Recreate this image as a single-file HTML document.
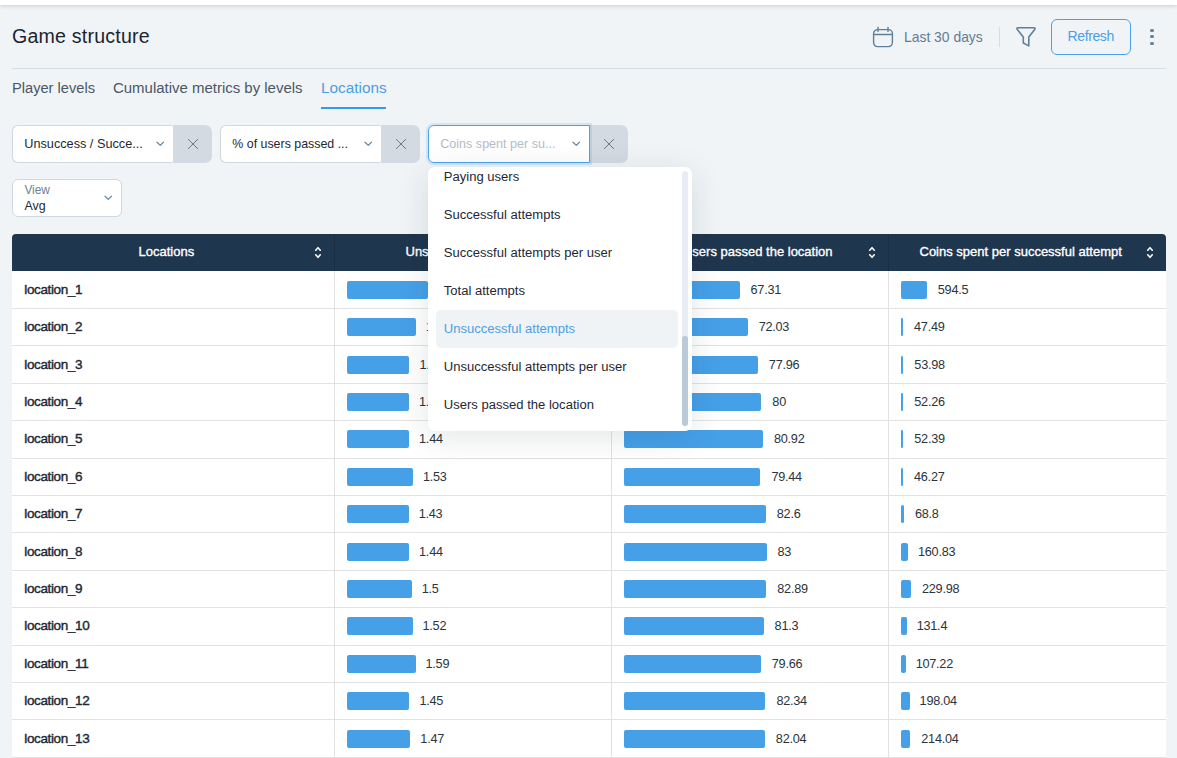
<!DOCTYPE html><html><head><meta charset="utf-8"><style>
html,body{margin:0;padding:0}
body{width:1177px;height:758px;overflow:hidden;background:#f0f4f7;position:relative;font-family:"Liberation Sans",sans-serif}
.t{position:absolute;white-space:nowrap}
.a{position:absolute}
</style></head><body>
<div class="a" style="left:0;top:0;width:1177px;height:5px;background:#fff;box-shadow:0 1px 4px rgba(0,0,0,0.16)"></div>
<div class="t" style="left:12px;top:26.61px;font-size:19.6px;line-height:19.6px;color:#1b2530;font-weight:400;letter-spacing:0.2px;">Game structure</div>
<svg class="a" style="left:872px;top:26px" width="22" height="22" viewBox="0 0 22 22" fill="none" stroke="#5f7f9a" stroke-width="1.4" stroke-linecap="round">
<rect x="1.6" y="3.6" width="18.8" height="17" rx="4"/><line x1="1.6" y1="8.5" x2="20.4" y2="8.5"/><line x1="6" y1="1.4" x2="6" y2="5.4"/><line x1="16" y1="1.4" x2="16" y2="5.4"/></svg>
<div class="t" style="left:904px;top:30.93px;font-size:13.9px;line-height:13.9px;color:#617d95;font-weight:400;">Last 30 days</div>
<div class="a" style="left:999px;top:27px;width:1px;height:20px;background:#d6dde4"></div>
<svg class="a" style="left:1016px;top:26px" width="20" height="22" viewBox="0 0 20 22" fill="none" stroke="#5f7f9a" stroke-width="1.6" stroke-linejoin="round">
<path d="M1.9,1.8 H18.1 Q19.6,2 18.7,3.4 L12.8,11 V19.9 L7.3,17 V11 L1.3,3.4 Q0.4,2 1.9,1.8 Z"/></svg>
<div class="a" style="left:1051px;top:19px;width:78px;height:34px;border:1px solid #4aa3e8;border-radius:6px"></div>
<div class="t" style="left:1067.5px;top:29.15px;font-size:14px;line-height:14px;color:#4a9fe3;font-weight:400;letter-spacing:-0.38px;">Refresh</div>
<div class="a" style="left:1150.35px;top:28.75px;width:3.3px;height:3.3px;border-radius:50%;background:#5f7f9a"></div>
<div class="a" style="left:1150.35px;top:35.15px;width:3.3px;height:3.3px;border-radius:50%;background:#5f7f9a"></div>
<div class="a" style="left:1150.35px;top:41.75px;width:3.3px;height:3.3px;border-radius:50%;background:#5f7f9a"></div>
<div class="a" style="left:12px;top:68px;width:1154px;height:1px;background:#d5dde5"></div>
<div class="t" style="left:12px;top:80.13px;font-size:15.2px;line-height:15.2px;color:#4a5866;font-weight:400;transform:scaleX(0.964);transform-origin:0 0;">Player levels</div>
<div class="t" style="left:113px;top:80.13px;font-size:15.2px;line-height:15.2px;color:#4a5866;font-weight:400;transform:scaleX(0.985);transform-origin:0 0;">Cumulative metrics by levels</div>
<div class="t" style="left:321px;top:80.13px;font-size:15.2px;line-height:15.2px;color:#4a9fe3;font-weight:400;transform:scaleX(1.01);transform-origin:0 0;">Locations</div>
<div class="a" style="left:321px;top:107px;width:65px;height:2px;background:#379ae6"></div>
<div class="a" style="left:167px;top:125px;width:45px;height:38px;background:#d3dae2;border-radius:0 7px 7px 0"></div>
<div class="a" style="left:12px;top:125px;width:159px;height:36px;background:#fff;border:1px solid #cfd8e1;border-right:1px solid #fff;border-radius:6px 0 0 6px"></div>
<div class="t" style="left:24.3px;top:138.35px;font-size:12.7px;line-height:12.7px;color:#1e2833;font-weight:400;">Unsuccess / Succe...</div>
<svg class="a" style="left:155.5px;top:141px" width="9" height="6" viewBox="0 0 9 6" fill="none" stroke="#6a90b0" stroke-width="1.3" stroke-linecap="round" stroke-linejoin="round"><path d="M1,1.2 L4.25,4.2 L7.5,1.2"/></svg>
<svg class="a" style="left:186.5px;top:138px" width="12" height="12" viewBox="0 0 12 12" stroke="#6f7882" stroke-width="1.0" stroke-linecap="round"><path d="M1.3,1.3 L10.7,10.7 M10.7,1.3 L1.3,10.7"/></svg>
<div class="a" style="left:375px;top:125px;width:45px;height:38px;background:#d3dae2;border-radius:0 7px 7px 0"></div>
<div class="a" style="left:220px;top:125px;width:159px;height:36px;background:#fff;border:1px solid #cfd8e1;border-right:1px solid #fff;border-radius:6px 0 0 6px"></div>
<div class="t" style="left:232.3px;top:137.70px;font-size:12.4px;line-height:12.4px;color:#1e2833;font-weight:400;">% of users passed ...</div>
<svg class="a" style="left:363.5px;top:141px" width="9" height="6" viewBox="0 0 9 6" fill="none" stroke="#6a90b0" stroke-width="1.3" stroke-linecap="round" stroke-linejoin="round"><path d="M1,1.2 L4.25,4.2 L7.5,1.2"/></svg>
<svg class="a" style="left:394.5px;top:138px" width="12" height="12" viewBox="0 0 12 12" stroke="#6f7882" stroke-width="1.0" stroke-linecap="round"><path d="M1.3,1.3 L10.7,10.7 M10.7,1.3 L1.3,10.7"/></svg>
<div class="a" style="left:583px;top:125px;width:45px;height:38px;background:#d3dae2;border-radius:0 7px 7px 0"></div>
<div class="a" style="left:428px;top:125px;width:162px;height:38px;border-radius:6px 0 0 6px;box-shadow:0 0 0 2px rgba(74,163,232,0.18)"></div>
<div class="a" style="left:428px;top:125px;width:160px;height:36px;background:#fff;border:1px solid #4aa3e8;border-radius:6px 0 0 6px"></div>
<div class="t" style="left:440.3px;top:138.48px;font-size:12.55px;line-height:12.55px;color:#b3bcc6;font-weight:400;">Coins spent per su...</div>
<svg class="a" style="left:571.5px;top:141px" width="9" height="6" viewBox="0 0 9 6" fill="none" stroke="#6a90b0" stroke-width="1.3" stroke-linecap="round" stroke-linejoin="round"><path d="M1,1.2 L4.25,4.2 L7.5,1.2"/></svg>
<svg class="a" style="left:602.5px;top:138px" width="12" height="12" viewBox="0 0 12 12" stroke="#6f7882" stroke-width="1.0" stroke-linecap="round"><path d="M1.3,1.3 L10.7,10.7 M10.7,1.3 L1.3,10.7"/></svg>
<div class="a" style="left:12px;top:179px;width:108px;height:36px;background:#fff;border:1px solid #cfd8e1;border-radius:6px"></div>
<div class="t" style="left:24.4px;top:184.53px;font-size:11.9px;line-height:11.9px;color:#6e8191;font-weight:400;">View</div>
<div class="t" style="left:24.4px;top:200.20px;font-size:12.4px;line-height:12.4px;color:#1e2833;font-weight:400;">Avg</div>
<svg class="a" style="left:103.5px;top:195px" width="9" height="6" viewBox="0 0 9 6" fill="none" stroke="#6a90b0" stroke-width="1.3" stroke-linecap="round" stroke-linejoin="round"><path d="M1,1.2 L4.25,4.2 L7.5,1.2"/></svg>
<div class="a" style="left:12px;top:234px;width:1154px;height:37px;background:#1f364f;border-radius:4px 4px 0 0"></div>
<div class="a" style="left:334px;top:234px;width:1px;height:37px;background:#1a2f45"></div>
<div class="a" style="left:611px;top:234px;width:1px;height:37px;background:#1a2f45"></div>
<div class="a" style="left:888px;top:234px;width:1px;height:37px;background:#1a2f45"></div>
<div class="t" style="left:138.5px;top:245.00px;font-size:13px;line-height:13px;color:#fff;font-weight:400;-webkit-text-stroke:0.35px #fff;">Locations</div>
<svg class="a" style="left:314px;top:246px" width="8" height="13" viewBox="0 0 8 13" fill="none" stroke="#fff" stroke-width="1.6" stroke-linecap="round" stroke-linejoin="round"><path d="M1.75,4.2 L4,1.7 L6.25,4.2 M1.75,8.8 L4,11.3 L6.25,8.8"/></svg>
<div class="t" style="left:405.5px;top:245.00px;font-size:13px;line-height:13px;color:#fff;font-weight:400;-webkit-text-stroke:0.35px #fff;">Unsuccess / Success attempts</div>
<svg class="a" style="left:591px;top:246px" width="8" height="13" viewBox="0 0 8 13" fill="none" stroke="#fff" stroke-width="1.6" stroke-linecap="round" stroke-linejoin="round"><path d="M1.75,4.2 L4,1.7 L6.25,4.2 M1.75,8.8 L4,11.3 L6.25,8.8"/></svg>
<div class="t" style="left:655.5px;top:245.00px;font-size:13px;line-height:13px;color:#fff;font-weight:400;-webkit-text-stroke:0.35px #fff;">% of users passed the location</div>
<svg class="a" style="left:868px;top:246px" width="8" height="13" viewBox="0 0 8 13" fill="none" stroke="#fff" stroke-width="1.6" stroke-linecap="round" stroke-linejoin="round"><path d="M1.75,4.2 L4,1.7 L6.25,4.2 M1.75,8.8 L4,11.3 L6.25,8.8"/></svg>
<div class="t" style="left:919.5px;top:245.00px;font-size:13px;line-height:13px;color:#fff;font-weight:400;-webkit-text-stroke:0.35px #fff;">Coins spent per successful attempt</div>
<svg class="a" style="left:1146px;top:246px" width="8" height="13" viewBox="0 0 8 13" fill="none" stroke="#fff" stroke-width="1.6" stroke-linecap="round" stroke-linejoin="round"><path d="M1.75,4.2 L4,1.7 L6.25,4.2 M1.75,8.8 L4,11.3 L6.25,8.8"/></svg>
<div class="a" style="left:12px;top:271px;width:1154px;height:487px;background:#fff"></div>
<div class="a" style="left:12px;top:308px;width:1154px;height:1px;background:#e2e2e2"></div>
<div class="a" style="left:12px;top:345px;width:1154px;height:1px;background:#e2e2e2"></div>
<div class="a" style="left:12px;top:383px;width:1154px;height:1px;background:#e2e2e2"></div>
<div class="a" style="left:12px;top:420px;width:1154px;height:1px;background:#e2e2e2"></div>
<div class="a" style="left:12px;top:458px;width:1154px;height:1px;background:#e2e2e2"></div>
<div class="a" style="left:12px;top:495px;width:1154px;height:1px;background:#e2e2e2"></div>
<div class="a" style="left:12px;top:532px;width:1154px;height:1px;background:#e2e2e2"></div>
<div class="a" style="left:12px;top:570px;width:1154px;height:1px;background:#e2e2e2"></div>
<div class="a" style="left:12px;top:607px;width:1154px;height:1px;background:#e2e2e2"></div>
<div class="a" style="left:12px;top:645px;width:1154px;height:1px;background:#e2e2e2"></div>
<div class="a" style="left:12px;top:682px;width:1154px;height:1px;background:#e2e2e2"></div>
<div class="a" style="left:12px;top:719px;width:1154px;height:1px;background:#e2e2e2"></div>
<div class="a" style="left:12px;top:757px;width:1154px;height:1px;background:#e2e2e2"></div>
<div class="a" style="left:334px;top:271px;width:1px;height:487px;background:#e2e2e2"></div>
<div class="a" style="left:611px;top:271px;width:1px;height:487px;background:#e2e2e2"></div>
<div class="a" style="left:888px;top:271px;width:1px;height:487px;background:#e2e2e2"></div>
<div class="t" style="left:24.3px;top:282.87px;font-size:13.5px;line-height:13.5px;color:#1e2833;font-weight:400;letter-spacing:-0.37px;-webkit-text-stroke:0.4px #1e2833;">location_1</div>
<div class="a" style="left:347px;top:281px;width:81.03px;height:18px;background:#46a0e8;border-radius:2px"></div>
<div class="t" style="left:438.028px;top:283.75px;font-size:12.7px;line-height:12.7px;color:#2b333c;font-weight:400;letter-spacing:-0.25px;">1.88</div>
<div class="a" style="left:624px;top:281px;width:115.57px;height:18px;background:#46a0e8;border-radius:2px"></div>
<div class="t" style="left:750.57127px;top:283.75px;font-size:12.7px;line-height:12.7px;color:#2b333c;font-weight:400;letter-spacing:-0.25px;">67.31</div>
<div class="a" style="left:901px;top:281px;width:25.80px;height:18px;background:#46a0e8;border-radius:2px"></div>
<div class="t" style="left:937.8013px;top:283.75px;font-size:12.7px;line-height:12.7px;color:#2b333c;font-weight:400;letter-spacing:-0.25px;">594.5</div>
<div class="t" style="left:24.3px;top:320.27px;font-size:13.5px;line-height:13.5px;color:#1e2833;font-weight:400;letter-spacing:-0.37px;-webkit-text-stroke:0.4px #1e2833;">location_2</div>
<div class="a" style="left:347px;top:318px;width:68.96px;height:18px;background:#46a0e8;border-radius:2px"></div>
<div class="t" style="left:425.96000000000004px;top:321.15px;font-size:12.7px;line-height:12.7px;color:#2b333c;font-weight:400;letter-spacing:-0.25px;">1.6</div>
<div class="a" style="left:624px;top:318px;width:123.68px;height:18px;background:#46a0e8;border-radius:2px"></div>
<div class="t" style="left:758.67551px;top:321.15px;font-size:12.7px;line-height:12.7px;color:#2b333c;font-weight:400;letter-spacing:-0.25px;">72.03</div>
<div class="a" style="left:901px;top:318px;width:2.06px;height:18px;background:#46a0e8;border-radius:2px"></div>
<div class="t" style="left:914.061066px;top:321.15px;font-size:12.7px;line-height:12.7px;color:#2b333c;font-weight:400;letter-spacing:-0.25px;">47.49</div>
<div class="t" style="left:24.3px;top:357.67px;font-size:13.5px;line-height:13.5px;color:#1e2833;font-weight:400;letter-spacing:-0.37px;-webkit-text-stroke:0.4px #1e2833;">location_3</div>
<div class="a" style="left:347px;top:356px;width:62.49px;height:18px;background:#46a0e8;border-radius:2px"></div>
<div class="t" style="left:419.495px;top:358.55px;font-size:12.7px;line-height:12.7px;color:#2b333c;font-weight:400;letter-spacing:-0.25px;">1.45</div>
<div class="a" style="left:624px;top:356px;width:133.86px;height:18px;background:#46a0e8;border-radius:2px"></div>
<div class="t" style="left:768.85732px;top:358.55px;font-size:12.7px;line-height:12.7px;color:#2b333c;font-weight:400;letter-spacing:-0.25px;">77.96</div>
<div class="a" style="left:901px;top:356px;width:2.34px;height:18px;background:#46a0e8;border-radius:2px"></div>
<div class="t" style="left:914.342732px;top:358.55px;font-size:12.7px;line-height:12.7px;color:#2b333c;font-weight:400;letter-spacing:-0.25px;">53.98</div>
<div class="t" style="left:24.3px;top:395.07px;font-size:13.5px;line-height:13.5px;color:#1e2833;font-weight:400;letter-spacing:-0.37px;-webkit-text-stroke:0.4px #1e2833;">location_4</div>
<div class="a" style="left:347px;top:393px;width:62.06px;height:18px;background:#46a0e8;border-radius:2px"></div>
<div class="t" style="left:419.064px;top:395.95px;font-size:12.7px;line-height:12.7px;color:#2b333c;font-weight:400;letter-spacing:-0.25px;">1.44</div>
<div class="a" style="left:624px;top:393px;width:137.36px;height:18px;background:#46a0e8;border-radius:2px"></div>
<div class="t" style="left:772.36px;top:395.95px;font-size:12.7px;line-height:12.7px;color:#2b333c;font-weight:400;letter-spacing:-0.25px;">80</div>
<div class="a" style="left:901px;top:393px;width:2.27px;height:18px;background:#46a0e8;border-radius:2px"></div>
<div class="t" style="left:914.268084px;top:395.95px;font-size:12.7px;line-height:12.7px;color:#2b333c;font-weight:400;letter-spacing:-0.25px;">52.26</div>
<div class="t" style="left:24.3px;top:432.47px;font-size:13.5px;line-height:13.5px;color:#1e2833;font-weight:400;letter-spacing:-0.37px;-webkit-text-stroke:0.4px #1e2833;">location_5</div>
<div class="a" style="left:347px;top:430px;width:62.06px;height:18px;background:#46a0e8;border-radius:2px"></div>
<div class="t" style="left:419.064px;top:433.35px;font-size:12.7px;line-height:12.7px;color:#2b333c;font-weight:400;letter-spacing:-0.25px;">1.44</div>
<div class="a" style="left:624px;top:430px;width:138.94px;height:18px;background:#46a0e8;border-radius:2px"></div>
<div class="t" style="left:773.93964px;top:433.35px;font-size:12.7px;line-height:12.7px;color:#2b333c;font-weight:400;letter-spacing:-0.25px;">80.92</div>
<div class="a" style="left:901px;top:430px;width:2.27px;height:18px;background:#46a0e8;border-radius:2px"></div>
<div class="t" style="left:914.273726px;top:433.35px;font-size:12.7px;line-height:12.7px;color:#2b333c;font-weight:400;letter-spacing:-0.25px;">52.39</div>
<div class="t" style="left:24.3px;top:469.87px;font-size:13.5px;line-height:13.5px;color:#1e2833;font-weight:400;letter-spacing:-0.37px;-webkit-text-stroke:0.4px #1e2833;">location_6</div>
<div class="a" style="left:347px;top:468px;width:65.94px;height:18px;background:#46a0e8;border-radius:2px"></div>
<div class="t" style="left:422.943px;top:470.75px;font-size:12.7px;line-height:12.7px;color:#2b333c;font-weight:400;letter-spacing:-0.25px;">1.53</div>
<div class="a" style="left:624px;top:468px;width:136.40px;height:18px;background:#46a0e8;border-radius:2px"></div>
<div class="t" style="left:771.3984800000001px;top:470.75px;font-size:12.7px;line-height:12.7px;color:#2b333c;font-weight:400;letter-spacing:-0.25px;">79.44</div>
<div class="a" style="left:901px;top:468px;width:2.01px;height:18px;background:#46a0e8;border-radius:2px"></div>
<div class="t" style="left:914.008118px;top:470.75px;font-size:12.7px;line-height:12.7px;color:#2b333c;font-weight:400;letter-spacing:-0.25px;">46.27</div>
<div class="t" style="left:24.3px;top:507.27px;font-size:13.5px;line-height:13.5px;color:#1e2833;font-weight:400;letter-spacing:-0.37px;-webkit-text-stroke:0.4px #1e2833;">location_7</div>
<div class="a" style="left:347px;top:505px;width:61.63px;height:18px;background:#46a0e8;border-radius:2px"></div>
<div class="t" style="left:418.633px;top:508.15px;font-size:12.7px;line-height:12.7px;color:#2b333c;font-weight:400;letter-spacing:-0.25px;">1.43</div>
<div class="a" style="left:624px;top:505px;width:141.82px;height:18px;background:#46a0e8;border-radius:2px"></div>
<div class="t" style="left:776.8242px;top:508.15px;font-size:12.7px;line-height:12.7px;color:#2b333c;font-weight:400;letter-spacing:-0.25px;">82.6</div>
<div class="a" style="left:901px;top:505px;width:2.99px;height:18px;background:#46a0e8;border-radius:2px"></div>
<div class="t" style="left:914.98592px;top:508.15px;font-size:12.7px;line-height:12.7px;color:#2b333c;font-weight:400;letter-spacing:-0.25px;">68.8</div>
<div class="t" style="left:24.3px;top:544.67px;font-size:13.5px;line-height:13.5px;color:#1e2833;font-weight:400;letter-spacing:-0.37px;-webkit-text-stroke:0.4px #1e2833;">location_8</div>
<div class="a" style="left:347px;top:543px;width:62.06px;height:18px;background:#46a0e8;border-radius:2px"></div>
<div class="t" style="left:419.064px;top:545.55px;font-size:12.7px;line-height:12.7px;color:#2b333c;font-weight:400;letter-spacing:-0.25px;">1.44</div>
<div class="a" style="left:624px;top:543px;width:142.51px;height:18px;background:#46a0e8;border-radius:2px"></div>
<div class="t" style="left:777.511px;top:545.55px;font-size:12.7px;line-height:12.7px;color:#2b333c;font-weight:400;letter-spacing:-0.25px;">83</div>
<div class="a" style="left:901px;top:543px;width:6.98px;height:18px;background:#46a0e8;border-radius:2px"></div>
<div class="t" style="left:917.980022px;top:545.55px;font-size:12.7px;line-height:12.7px;color:#2b333c;font-weight:400;letter-spacing:-0.25px;">160.83</div>
<div class="t" style="left:24.3px;top:582.07px;font-size:13.5px;line-height:13.5px;color:#1e2833;font-weight:400;letter-spacing:-0.37px;-webkit-text-stroke:0.4px #1e2833;">location_9</div>
<div class="a" style="left:347px;top:580px;width:64.65px;height:18px;background:#46a0e8;border-radius:2px"></div>
<div class="t" style="left:421.65px;top:582.95px;font-size:12.7px;line-height:12.7px;color:#2b333c;font-weight:400;letter-spacing:-0.25px;">1.5</div>
<div class="a" style="left:624px;top:580px;width:142.32px;height:18px;background:#46a0e8;border-radius:2px"></div>
<div class="t" style="left:777.32213px;top:582.95px;font-size:12.7px;line-height:12.7px;color:#2b333c;font-weight:400;letter-spacing:-0.25px;">82.89</div>
<div class="a" style="left:901px;top:580px;width:9.98px;height:18px;background:#46a0e8;border-radius:2px"></div>
<div class="t" style="left:921.981132px;top:582.95px;font-size:12.7px;line-height:12.7px;color:#2b333c;font-weight:400;letter-spacing:-0.25px;">229.98</div>
<div class="t" style="left:24.3px;top:619.47px;font-size:13.5px;line-height:13.5px;color:#1e2833;font-weight:400;letter-spacing:-0.37px;-webkit-text-stroke:0.4px #1e2833;">location_10</div>
<div class="a" style="left:347px;top:617px;width:65.51px;height:18px;background:#46a0e8;border-radius:2px"></div>
<div class="t" style="left:422.512px;top:620.35px;font-size:12.7px;line-height:12.7px;color:#2b333c;font-weight:400;letter-spacing:-0.25px;">1.52</div>
<div class="a" style="left:624px;top:617px;width:139.59px;height:18px;background:#46a0e8;border-radius:2px"></div>
<div class="t" style="left:774.5921px;top:620.35px;font-size:12.7px;line-height:12.7px;color:#2b333c;font-weight:400;letter-spacing:-0.25px;">81.3</div>
<div class="a" style="left:901px;top:617px;width:5.70px;height:18px;background:#46a0e8;border-radius:2px"></div>
<div class="t" style="left:916.70276px;top:620.35px;font-size:12.7px;line-height:12.7px;color:#2b333c;font-weight:400;letter-spacing:-0.25px;">131.4</div>
<div class="t" style="left:24.3px;top:656.87px;font-size:13.5px;line-height:13.5px;color:#1e2833;font-weight:400;letter-spacing:-0.37px;-webkit-text-stroke:0.4px #1e2833;">location_11</div>
<div class="a" style="left:347px;top:655px;width:68.53px;height:18px;background:#46a0e8;border-radius:2px"></div>
<div class="t" style="left:425.529px;top:657.75px;font-size:12.7px;line-height:12.7px;color:#2b333c;font-weight:400;letter-spacing:-0.25px;">1.59</div>
<div class="a" style="left:624px;top:655px;width:136.78px;height:18px;background:#46a0e8;border-radius:2px"></div>
<div class="t" style="left:771.77622px;top:657.75px;font-size:12.7px;line-height:12.7px;color:#2b333c;font-weight:400;letter-spacing:-0.25px;">79.66</div>
<div class="a" style="left:901px;top:655px;width:4.65px;height:18px;background:#46a0e8;border-radius:2px"></div>
<div class="t" style="left:915.653348px;top:657.75px;font-size:12.7px;line-height:12.7px;color:#2b333c;font-weight:400;letter-spacing:-0.25px;">107.22</div>
<div class="t" style="left:24.3px;top:694.27px;font-size:13.5px;line-height:13.5px;color:#1e2833;font-weight:400;letter-spacing:-0.37px;-webkit-text-stroke:0.4px #1e2833;">location_12</div>
<div class="a" style="left:347px;top:692px;width:62.49px;height:18px;background:#46a0e8;border-radius:2px"></div>
<div class="t" style="left:419.495px;top:695.15px;font-size:12.7px;line-height:12.7px;color:#2b333c;font-weight:400;letter-spacing:-0.25px;">1.45</div>
<div class="a" style="left:624px;top:692px;width:141.38px;height:18px;background:#46a0e8;border-radius:2px"></div>
<div class="t" style="left:776.37778px;top:695.15px;font-size:12.7px;line-height:12.7px;color:#2b333c;font-weight:400;letter-spacing:-0.25px;">82.34</div>
<div class="a" style="left:901px;top:692px;width:8.59px;height:18px;background:#46a0e8;border-radius:2px"></div>
<div class="t" style="left:919.594936px;top:695.15px;font-size:12.7px;line-height:12.7px;color:#2b333c;font-weight:400;letter-spacing:-0.25px;">198.04</div>
<div class="t" style="left:24.3px;top:731.67px;font-size:13.5px;line-height:13.5px;color:#1e2833;font-weight:400;letter-spacing:-0.37px;-webkit-text-stroke:0.4px #1e2833;">location_13</div>
<div class="a" style="left:347px;top:730px;width:63.36px;height:18px;background:#46a0e8;border-radius:2px"></div>
<div class="t" style="left:420.35699999999997px;top:732.55px;font-size:12.7px;line-height:12.7px;color:#2b333c;font-weight:400;letter-spacing:-0.25px;">1.47</div>
<div class="a" style="left:624px;top:730px;width:140.86px;height:18px;background:#46a0e8;border-radius:2px"></div>
<div class="t" style="left:775.86268px;top:732.55px;font-size:12.7px;line-height:12.7px;color:#2b333c;font-weight:400;letter-spacing:-0.25px;">82.04</div>
<div class="a" style="left:901px;top:730px;width:9.29px;height:18px;background:#46a0e8;border-radius:2px"></div>
<div class="t" style="left:921.289336px;top:732.55px;font-size:12.7px;line-height:12.7px;color:#2b333c;font-weight:400;letter-spacing:-0.25px;">214.04</div>
<div class="a" style="left:428px;top:167px;width:264px;height:264px;background:#fff;border-radius:7px;box-shadow:0 6px 32px rgba(20,30,40,0.12);overflow:hidden">
<div class="t" style="left:15.8px;top:3.35px;font-size:13.05px;line-height:13.05px;color:#1e2833;font-weight:400;">Paying users</div>
<div class="t" style="left:15.8px;top:41.35px;font-size:13.05px;line-height:13.05px;color:#1e2833;font-weight:400;">Successful attempts</div>
<div class="t" style="left:15.8px;top:79.35px;font-size:13.05px;line-height:13.05px;color:#1e2833;font-weight:400;">Successful attempts per user</div>
<div class="t" style="left:15.8px;top:117.35px;font-size:13.05px;line-height:13.05px;color:#1e2833;font-weight:400;">Total attempts</div>
<div class="a" style="left:8px;top:143px;width:242px;height:38px;background:#f0f3f6;border-radius:5px"></div>
<div class="t" style="left:15.8px;top:155.35px;font-size:13.05px;line-height:13.05px;color:#4a9fe3;font-weight:400;">Unsuccessful attempts</div>
<div class="t" style="left:15.8px;top:193.35px;font-size:13.05px;line-height:13.05px;color:#1e2833;font-weight:400;">Unsuccessful attempts per user</div>
<div class="t" style="left:15.8px;top:231.35px;font-size:13.05px;line-height:13.05px;color:#1e2833;font-weight:400;">Users passed the location</div>
<div class="a" style="left:254px;top:4px;width:6px;height:255px;background:#e8edf3;border-radius:3px"></div>
<div class="a" style="left:254px;top:169px;width:6px;height:90px;background:#b9cad8;border-radius:3px"></div>
</div>
</body></html>
